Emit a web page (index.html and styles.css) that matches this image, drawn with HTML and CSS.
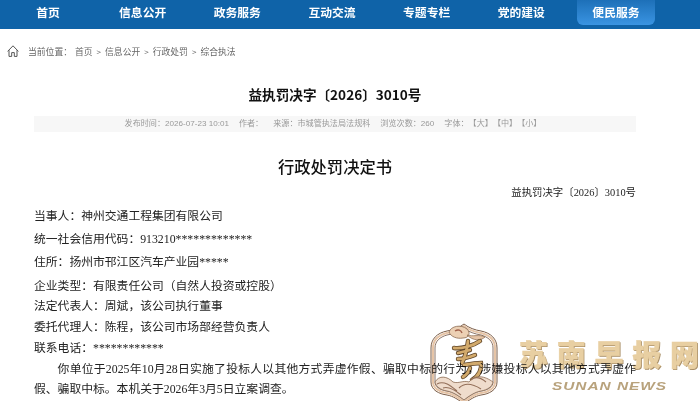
FILE: index.html
```html
<!DOCTYPE html>
<html lang="zh-CN">
    <head>
        <meta charset="UTF-8">
        <title>益执罚决字〔2026〕3010号</title>
        <link rel="stylesheet" href="styles.css">
    </head>
    <body>
        <nav class="nav">
            <a class="nav-item" href="#">首页</a>
            <a class="nav-item" href="#">信息公开</a>
            <a class="nav-item" href="#">政务服务</a>
            <a class="nav-item" href="#">互动交流</a>
            <a class="nav-item" href="#">专题专栏</a>
            <a class="nav-item" href="#">党的建设</a>
            <a class="nav-item nav-active" href="#"><span>便民服务</span></a>
        </nav>

        <div class="crumb">
            <svg class="crumb-home" width="12" height="12" viewBox="0 0 12 12" fill="none" stroke="#555" stroke-width="1">
                <path d="M0.6 6.4 L6 0.8 L11.4 6.4"/>
                <path d="M2 5.2 V11.4 H4.7 V7.6 H7.3 V11.4 H10 V5.2"/>
            </svg>
            <span class="crumb-text">当前位置：</span>
            <a href="#">首页</a><i>&gt;</i><a href="#">信息公开</a><i>&gt;</i><a href="#">行政处罚</a><i>&gt;</i><a href="#">综合执法</a>
        </div>

        <div class="article">
            <h1 class="article-title">益执罚决字〔2026〕3010号</h1>
            <div class="meta">
                <span>发布时间：2026-07-23 10:01</span>
                <span>作者：</span>
                <span>来源：市城管执法局法规科</span>
                <span>浏览次数：260</span>
                <span>字体：【大】【中】【小】</span>
            </div>

            <h2 class="doc-title">行政处罚决定书</h2>
            <p class="doc-no">益执罚决字〔2026〕3010号</p>

            <p class="line line-wide">当事人：神州交通工程集团有限公司</p>
            <p class="line line-wide">统一社会信用代码：913210*************</p>
            <p class="line line-wide">住所：扬州市邗江区汽车产业园*****</p>
            <p class="line">企业类型：有限责任公司（自然人投资或控股）</p>
            <p class="line">法定代表人：周斌，该公司执行董事</p>
            <p class="line">委托代理人：陈程，该公司市场部经营负责人</p>
            <p class="line">联系电话：************</p>
            <p class="line line-indent">你单位于2025年10月28日实施了投标人以其他方式弄虚作假、骗取中标的行为，涉嫌投标人以其他方式弄虚作假、骗取中标。本机关于2026年3月5日立案调查。</p>
        </div>

        <div class="mark">
            <svg class="mark-seal" width="70" height="80" viewBox="0 0 70 80" fill="none">
                <path d="M35 2 C40 6 46 8 52 9 C62 11 68 17 68 26 V60 C68 68 60 72 52 73 C46 74 40 78 35 82 C30 78 24 74 18 73 C10 72 2 68 2 60 V26 C2 17 8 11 18 9 C24 8 30 6 35 2 Z" stroke="#7a5c46" stroke-width="1" fill="#fff"/>
                <path d="M35 4 C40 8 46 10 52 11 C60 13 66 18 66 26 V60 C66 66 60 70 52 71 C46 72 40 76 35 80 C30 76 24 72 18 71 C10 70 4 66 4 60 V26 C4 18 10 13 18 11 C24 10 30 8 35 4 Z" stroke="#e6c4a6" stroke-width="2"/>
                <path d="M35 6.5 C40 10 46 12 52 13 C59 15 64 19 64 26 V60 C64 65 59 68 52 69 C46 70 40 74 35 78 C30 74 24 70 18 69 C11 68 6 65 6 60 V26 C6 19 11 15 18 13 C24 12 30 10 35 6.5 Z" stroke="#6e5240" stroke-width="0.8"/>
                <path d="M20 10 C22 4 32 2 38 7 C42 11 40 16 34 16 C28 17 22 15 20 10 Z" fill="#ecd0b4" stroke="#8a6a50" stroke-width="0.8"/>
                <path d="M26 9 C29 7 32 8 33 11" stroke="#a0604a" stroke-width="1.4"/>
                <path d="M38 13 C44 15 50 12 56 15 C52 19 44 19 38 13 Z" fill="#e6c4a6" stroke="#8a6a50" stroke-width="0.7"/>
                <g stroke="#5e4428" stroke-width="4.4" stroke-linecap="round">
                    <path d="M25 26 C32 27 44 24 51 19"/>
                    <path d="M29 31 L41 28"/>
                    <path d="M29 37 C35 37 41 35 46 33"/>
                    <path d="M39 19 C38 28 36 35 33 41"/>
                    <path d="M35 43 C41 42 47 41 52 41 C53 47 50 54 43 58"/>
                    <path d="M41 46 C40 50 37 53 34 55"/>
                </g>
                <g stroke="#d2aa6c" stroke-width="2.8" stroke-linecap="round">
                    <path d="M25 26 C32 27 44 24 51 19"/>
                    <path d="M29 31 L41 28"/>
                    <path d="M29 37 C35 37 41 35 46 33"/>
                    <path d="M39 19 C38 28 36 35 33 41"/>
                    <path d="M35 43 C41 42 47 41 52 41 C53 47 50 54 43 58"/>
                    <path d="M41 46 C40 50 37 53 34 55"/>
                </g>
                <path d="M6 60 C10 53 18 54 24 60 C30 62 34 58 40 60 C46 52 56 54 64 60 C63 65 58 68 52 69 C46 70 40 74 35 78 C30 74 24 70 18 69 C12 68 7 65 6 60 Z" fill="#efdccc" stroke="#8a6a50" stroke-width="0.8"/>
                <path d="M8 62 C15 58 22 64 28 69 M30 66 C36 60 44 62 52 67 M42 58 C46 54 52 56 57 60 M14 66 C20 64 26 68 32 73" stroke="#94705a" stroke-width="1.1"/>
            </svg>
            <div class="mark-name">
                <div class="mark-cn">苏南早报网</div>
                <div class="mark-en">SUNAN NEWS</div>
            </div>
        </div>
    </body>
</html>
```

FILE: styles.css
```css
*{
    margin: 0;
    padding: 0;
    box-sizing: border-box;
}
html, body{
    height: 401px;
    overflow: hidden;
}
body{
    position: relative;
    background-color: #fff;
    font-family: "Liberation Serif", "Noto Sans CJK SC", serif;
    color: #222;
    text-spacing-trim: space-all;
}
a{
    color: inherit;
    text-decoration: none;
}
.nav{
    display: flex;
    height: 29px;
    padding-left: 0.7px;
    background-color: #0f63a8;
    font-family: "Noto Sans CJK SC", sans-serif;
}
.nav-item{
    width: 94.67px;
    text-align: center;
    color: #fff;
    font-size: 11.8px;
    font-weight: 700;
    line-height: 24px;
}
.nav-active span{
    display: block;
    width: 78px;
    height: 25px;
    margin: 0 auto;
    border-radius: 0 0 6px 6px;
    background: linear-gradient(#1d70b8, #3a94e2);
}
.crumb{
    display: flex;
    align-items: center;
    height: 14px;
    margin-top: 15px;
    padding-left: 7px;
    font-family: "Noto Sans CJK SC", sans-serif;
    font-size: 8.8px;
    color: #666;
}
.crumb-home{
    margin-right: 9px;
}
.crumb-text{
    margin-right: 3px;
}
.crumb i{
    margin: 0 4px;
    font-style: normal;
    font-size: 8px;
}
.article{
    width: 602px;
    margin-left: 34px;
    padding-top: 23px;
}
.article-title{
    height: 26px;
    text-align: center;
    font-family: "Noto Sans CJK SC", sans-serif;
    font-size: 13.6px;
    line-height: 26px;
    color: #111;
}
.meta{
    display: flex;
    justify-content: center;
    gap: 10px;
    height: 16px;
    margin-top: 9px;
    padding-right: 4px;
    background-color: #f7f7f7;
    font-family: "Liberation Sans", "Noto Sans CJK SC", sans-serif;
    font-size: 8.1px;
    line-height: 16px;
    color: #999;
}
.doc-title{
    margin-top: 25px;
    text-align: center;
    font-size: 16.3px;
    line-height: 22px;
    font-weight: 500;
    color: #111;
}
.doc-no{
    margin-top: 7px;
    text-align: right;
    font-size: 10.4px;
    line-height: 14px;
    color: #222;
}
.line{
    font-size: 11.8px;
    line-height: 20.7px;
}
.doc-no + .line{
    margin-top: 5.6px;
}
.line-wide{
    margin-bottom: 2.7px;
}
.line-indent{
    text-indent: 2em;
    text-align: justify;
}
/* watermark sits over the article text */
.mark{
    position: absolute;
    left: 429px;
    top: 322px;
    display: flex;
    mix-blend-mode: multiply;
}
.mark-name{
    width: 180px;
    margin-left: 20px;
    padding-top: 11px;
    font-family: "Noto Sans CJK SC", sans-serif;
}
.mark-cn{
    font-size: 29px;
    line-height: 40px;
    font-weight: 900;
    text-align: justify;
    text-align-last: justify;
    color: #e8cfa2;
    -webkit-text-stroke: 0.4px #e8cfa2;
    text-shadow: 1px 1px 0 #a98f68;
}
.mark-en{
    width: max-content;
    margin: 7px 0 0 33px;
    transform: scaleX(1.4);
    transform-origin: left;
    font-family: "Liberation Sans", sans-serif;
    font-size: 11px;
    line-height: 12px;
    font-weight: 700;
    font-style: italic;
    letter-spacing: 0.7px;
    color: #b8a27c;
    white-space: nowrap;
}
```
